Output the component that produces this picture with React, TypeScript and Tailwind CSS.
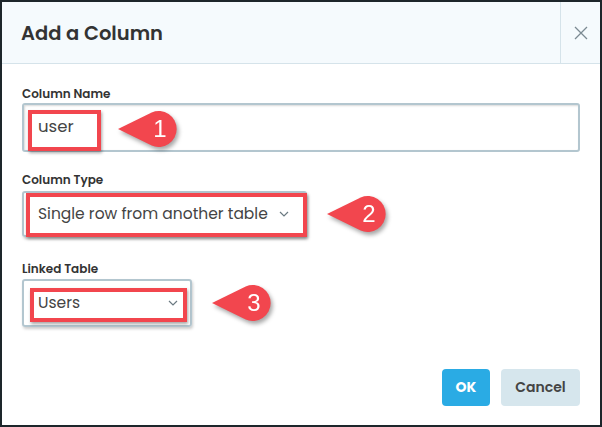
import React from "react";

const font = { fontFamily: "Poppins, Inter, 'Open Sans', sans-serif" };

const Callout = ({ n }: { n: string }) => (
  <div className="relative w-[62px] h-[40px] drop-shadow-[2px_3px_2px_rgba(0,0,0,0.35)]">
    <svg width="62" height="40" viewBox="0 0 62 40" className="absolute inset-0">
      <path d="M1 20 L34.7 3.4 A18 18 0 1 1 34.7 36.6 Z" fill="#f2464e" />
    </svg>
    <span className="absolute left-[24px] w-[38px] top-0 h-[40px] flex items-center justify-center text-white text-[24px] font-['Liberation_Sans',Arial,sans-serif]">
      {n}
    </span>
  </div>
);

const Chevron = () => (
  <svg width="10" height="6" viewBox="0 0 10 6" fill="none" stroke="#6b7a82" strokeWidth="1.2">
    <path d="M1 1 L5 5 L9 1" />
  </svg>
);

export default function App() {
  return (
    <div
      className="w-[602px] h-[427px] border-2 border-[#1d262b] bg-white flex flex-col text-[#333] overflow-hidden"
      style={font}
    >
      {/* Header */}
      <div className="flex h-[62px] bg-[#f5fafd] border-b border-[#d5e3ea] shrink-0">
        <div className="flex-1 flex items-center pl-[19px] pt-[3px] text-[19.5px] font-semibold text-[#333]">
          Add a Column
        </div>
        <button className="w-[40px] border-l border-[#d5e3ea] flex items-center justify-center">
          <svg width="14" height="14" viewBox="0 0 14 14" stroke="#7b8a92" strokeWidth="1.3">
            <path d="M1 1 L13 13 M13 1 L1 13" />
          </svg>
        </button>
      </div>

      {/* Body */}
      <div className="flex-1 flex flex-col px-[20px] pt-[22px]">
        <label className="text-[12px] font-semibold text-[#333] leading-[16px] mb-[1px]">Column Name</label>
        <div className="relative h-[49px] w-[558px] border-2 border-[#b3c6cf] rounded-[3px] shadow-[inset_1px_1px_2px_rgba(0,0,0,0.15)] flex items-center pl-[14px] text-[16.5px] text-[#444]">
          user
          <div className="absolute left-[4px] top-[5px] w-[73px] h-[41px] border-4 border-[#f2464e] shadow-[1px_2px_3px_rgba(0,0,0,0.35)]" />
          <div className="absolute left-[93px] top-[4px]">
            <Callout n="1" />
          </div>
        </div>

        <label className="text-[12px] font-semibold text-[#333] leading-[16px] mt-[20px] mb-[3px]">Column Type</label>
        <div className="flex items-center gap-[19px]">
          <div className="relative h-[46px] w-[285px] border-2 border-[#b3c6cf] rounded-[3px] shadow-[1px_2px_3px_rgba(0,0,0,0.2)] flex items-center justify-between pl-[14px] pr-[16px] text-[15.5px] text-[#444]">
            <span>Single row from another table</span>
            <Chevron />
            <div className="absolute left-[2px] top-[0px] w-[281px] h-[44px] border-4 border-[#f2464e] shadow-[1px_2px_3px_rgba(0,0,0,0.35)]" />
          </div>
          <Callout n="2" />
        </div>

        <label className="text-[12px] font-semibold text-[#333] leading-[16px] mt-[24px] mb-[2px]">Linked Table</label>
        <div className="flex items-center gap-[19px]">
          <div className="relative h-[48px] w-[170px] border-2 border-[#b3c6cf] rounded-[3px] shadow-[1px_2px_3px_rgba(0,0,0,0.2)] flex items-center justify-between pl-[14px] pr-[12px] text-[15.5px] text-[#444]">
            <span>Users</span>
            <Chevron />
            <div className="absolute left-[6px] top-[7px] w-[157px] h-[34px] border-4 border-[#f2464e] shadow-[1px_2px_3px_rgba(0,0,0,0.35)]" />
          </div>
          <Callout n="3" />
        </div>

        <div className="flex justify-end gap-[11px] mt-auto mb-[19px]">
          <button className="w-[48px] h-[37px] rounded-[4px] bg-[#2aabe4] text-white text-[14px] font-bold">OK</button>
          <button className="w-[79px] h-[37px] rounded-[4px] bg-[#d6e6ed] text-[#444] text-[14px] font-semibold">Cancel</button>
        </div>
      </div>
    </div>
  );
}
